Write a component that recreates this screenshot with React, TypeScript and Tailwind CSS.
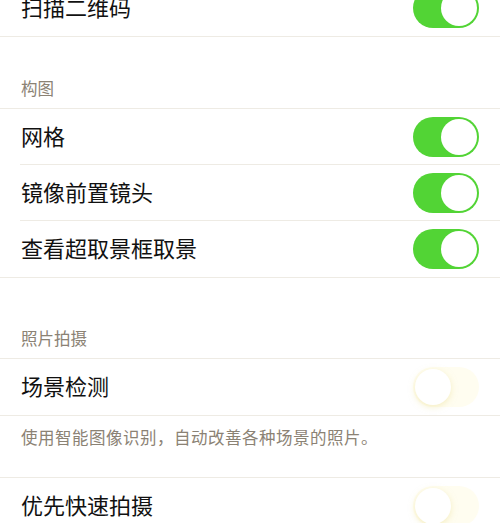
import React from "react";

const Toggle: React.FC<{ on: boolean }> = ({ on }) =>
  on ? (
    <div className="w-[66px] h-[40px] rounded-full bg-[#52d435] flex items-center justify-end pr-[2px]">
      <div className="w-[36px] h-[36px] rounded-full bg-white" />
    </div>
  ) : (
    <div className="w-[66px] h-[40px] rounded-full bg-[#fffdf0] flex items-center justify-start pl-[2px]">
      <div className="w-[36px] h-[36px] rounded-full bg-white shadow-[0_2px_6px_rgba(235,225,150,0.5)]" />
    </div>
  );

const Row: React.FC<{ label: string; on: boolean; inset?: boolean }> = ({
  label,
  on,
  inset,
}) => (
  <div className="relative h-[56px] flex items-center justify-between pl-[21px] pr-[21px]">
    <span className="text-[22px] text-[#111] leading-none pb-[5px]">{label}</span>
    <Toggle on={on} />
    {inset && (
      <div className="absolute left-[20px] right-0 bottom-0 h-px bg-[#eeebe4]" />
    )}
  </div>
);

const Header: React.FC<{ text: string; h: string }> = ({ text, h }) => (
  <div className={`${h} flex items-end pl-[21px] pb-[12px]`}>
    <span className="text-[16.5px] leading-none text-[#8b8274]">{text}</span>
  </div>
);

export default function App() {
  return (
    <div
      className="w-[500px] h-[523px] overflow-hidden bg-white"
      style={{ fontFamily: '"Noto Sans CJK SC", "Noto Sans", sans-serif' }}
    >
      <div className="-mt-[20px]">
        <div className="border-b border-[#eeebe4]">
          <Row label="扫描二维码" on />
        </div>
        <Header text="构图" h="h-[71px]" />
        <div className="border-y border-[#eeebe4]">
          <Row label="网格" on inset />
          <Row label="镜像前置镜头" on inset />
          <Row label="查看超取景框取景" on />
        </div>
        <Header text="照片拍摄" h="h-[80px]" />
        <div className="border-y border-[#eeebe4]">
          <Row label="场景检测" on={false} />
        </div>
        <div className="h-[61px] pl-[21px] pt-[9px]">
          <span className="text-[16.5px] leading-none tracking-[0.5px] text-[#8b8274]">
            使用智能图像识别，自动改善各种场景的照片。
          </span>
        </div>
        <div className="border-t border-[#eeebe4]">
          <Row label="优先快速拍摄" on={false} />
        </div>
      </div>
    </div>
  );
}
